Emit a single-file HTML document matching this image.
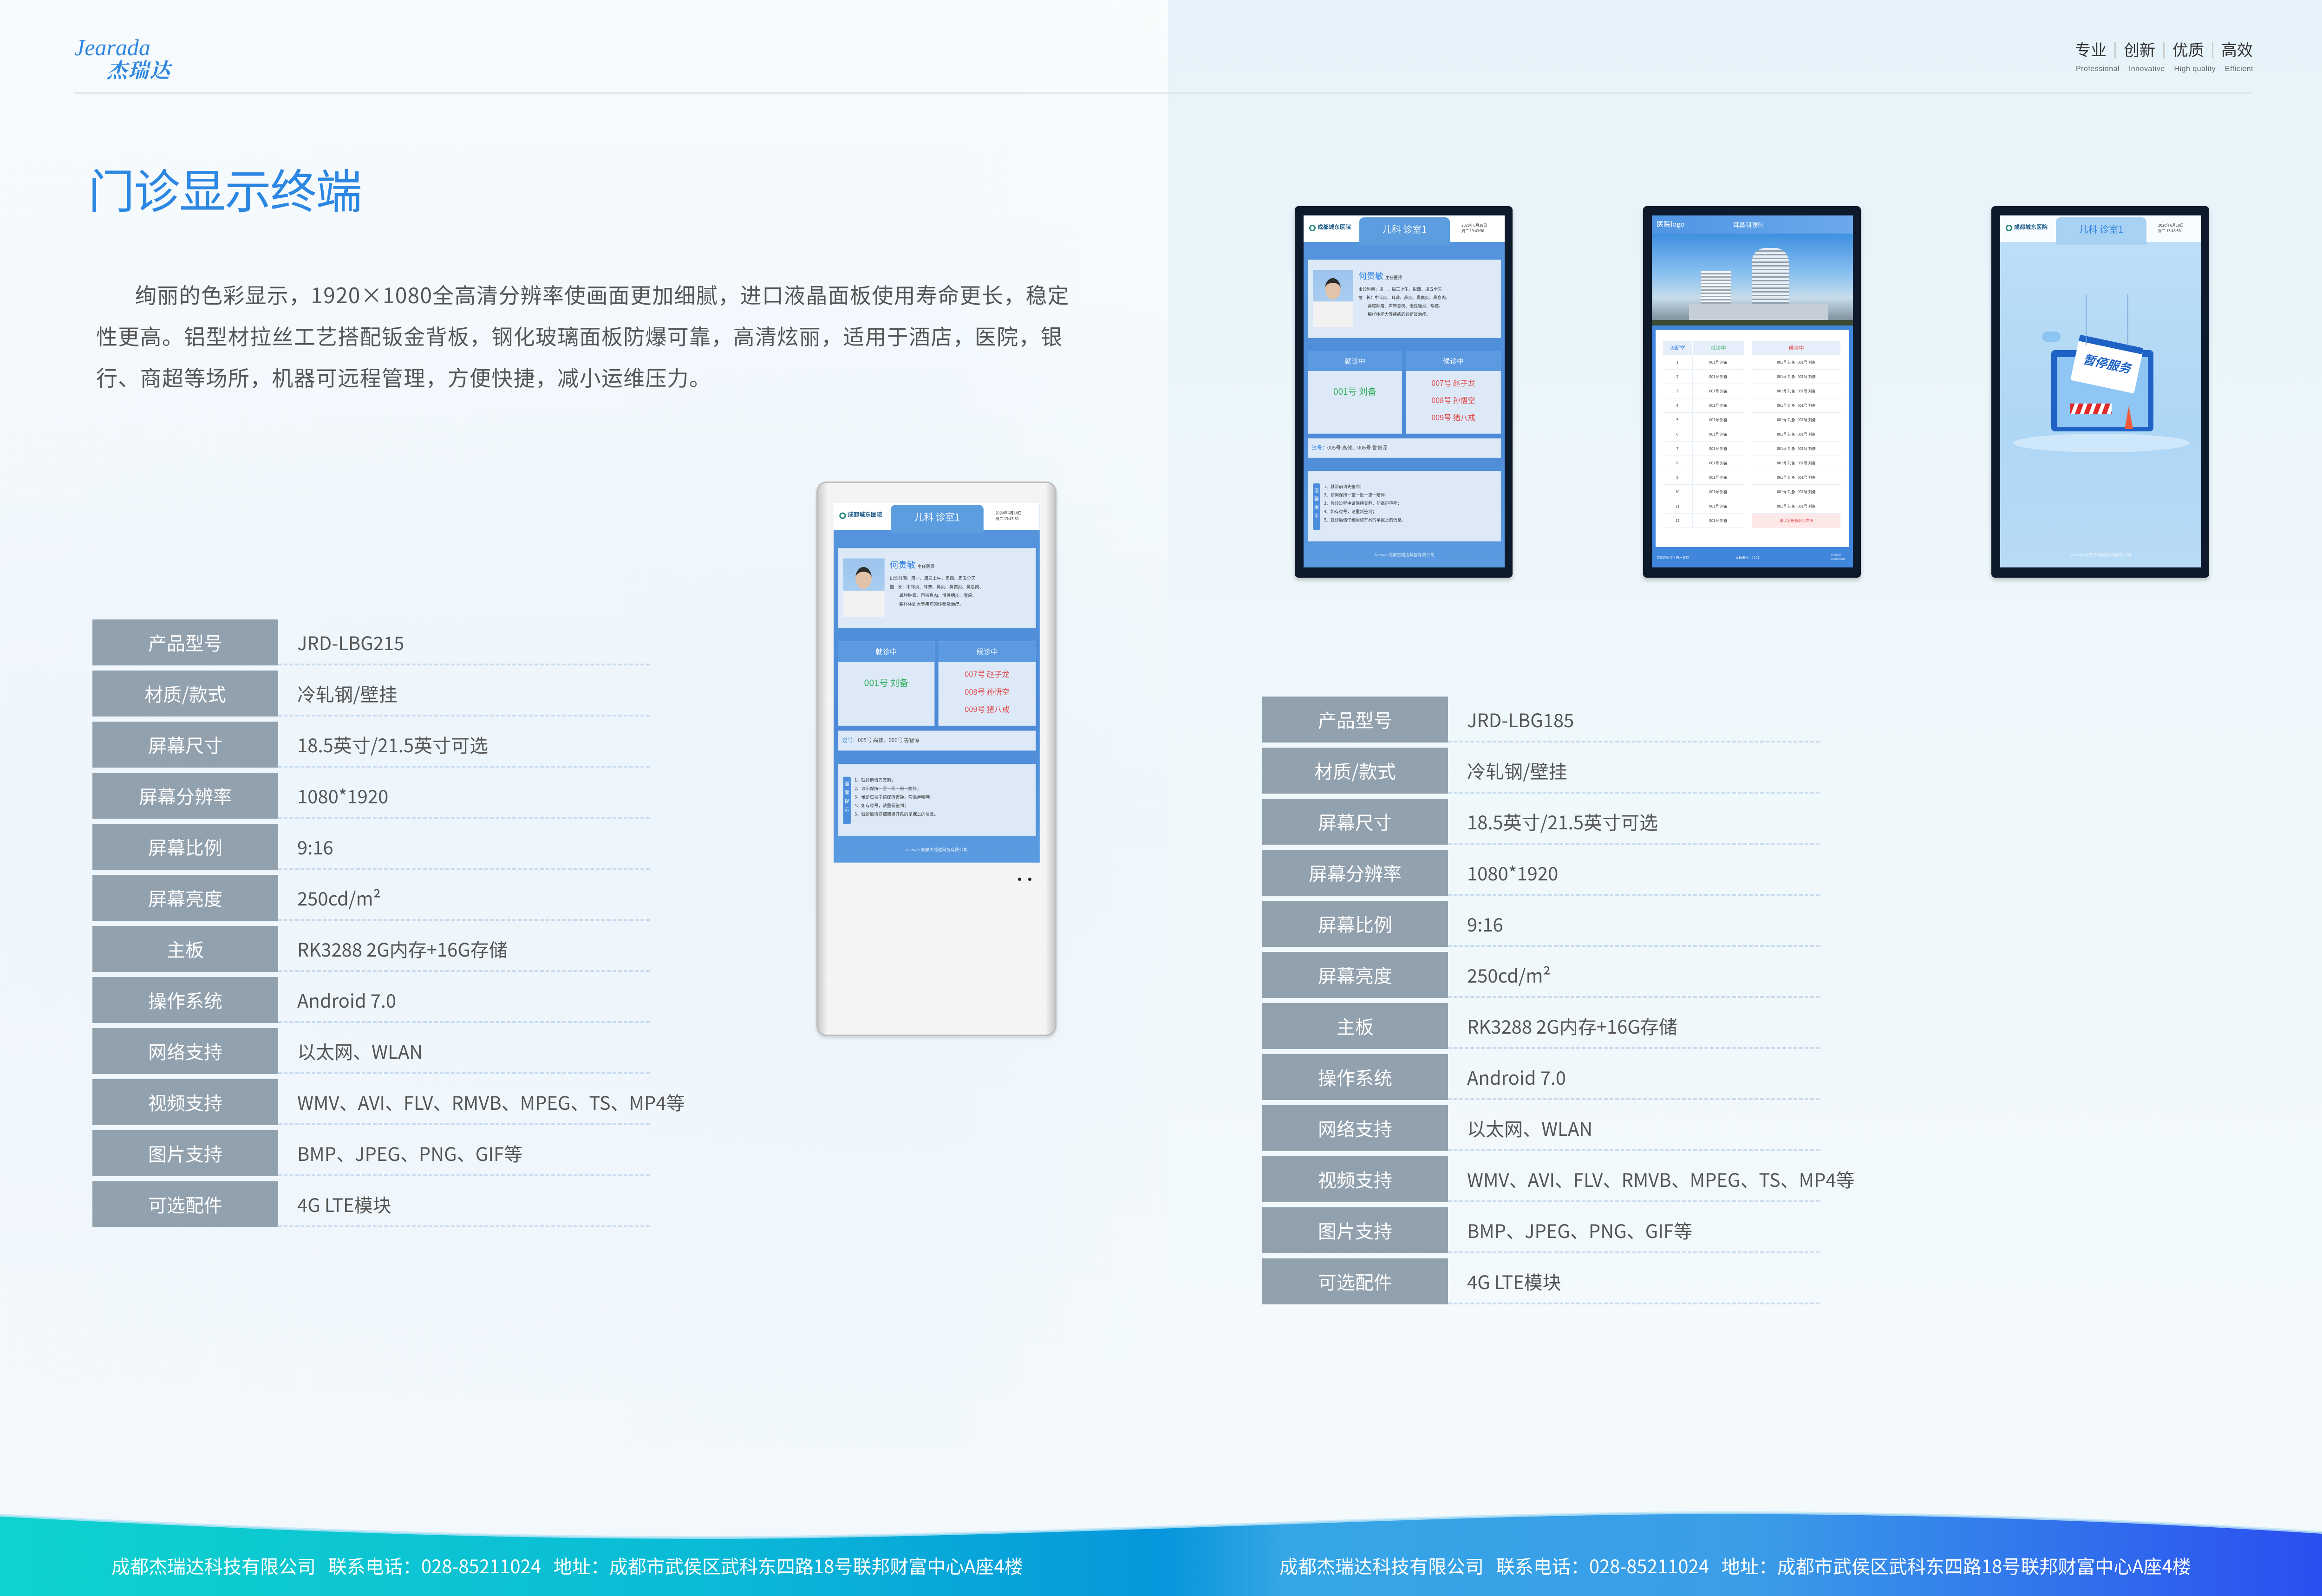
<!DOCTYPE html>
<html><head><meta charset="utf-8">
<style>
*{margin:0;padding:0;box-sizing:border-box}
body{width:5031px;height:3437px;position:relative;overflow:hidden;font-family:"Noto Sans CJK SC","Liberation Sans",sans-serif;
background:linear-gradient(90deg,#f1f7fc 0%,#eef6fc 40%,#f3f9fc 50%,#eef7fc 52%,#e9f4fb 75%,#eef7fb 100%);}
.a{position:absolute}
.bgl{left:0;top:0;width:2515px;height:3437px;background:linear-gradient(180deg,rgba(255,255,255,.5) 0%,rgba(230,242,251,.3) 50%,rgba(246,250,253,.6) 100%)}
.bgr{left:2515px;top:0;width:2516px;height:3437px;background:linear-gradient(180deg,#e6f3fa 0%,#eef7fb 40%,#f5fafc 100%)}
.lbl{width:400px;height:99px;background:#92a1ae;color:#fff;font-size:40px;line-height:99px;text-align:center}
.val{font-size:40px;color:#555;line-height:99px;height:99px;border-bottom:4px dashed #c9dcef}
.scr{position:absolute;width:433px;height:758px;overflow:hidden;background:linear-gradient(180deg,#5596de,#4c8ad8 60%,#5a9be0);font-family:"Noto Sans CJK SC",sans-serif}
.card{position:absolute;background:#dde9f7;border:1px solid #c5d9f1}
.dev{position:absolute;background:#0d1a2c;border-radius:8px}
</style></head><body>
<div class="a bgl"></div><div class="a bgr"></div>

<div class="a" style="left:160px;top:72px;font-family:'Liberation Serif',serif;font-style:italic;font-size:50px;color:#2f86e0;line-height:60px">Jearada</div>
<div class="a" style="left:230px;top:118px;font-family:'Noto Serif CJK SC',serif;font-weight:bold;font-style:italic;font-size:44px;color:#2f86e0;letter-spacing:2px;line-height:60px">杰瑞达</div>
<div class="a" style="left:160px;top:199px;width:4690px;height:4px;background:#e1e7ec"></div>
<div class="a" style="left:4468px;top:84px;font-size:34px;color:#333;white-space:nowrap;line-height:44px">专业<span style="display:inline-block;width:3px;height:36px;background:#ccc;margin:0 17px;vertical-align:-6px"></span>创新<span style="display:inline-block;width:3px;height:36px;background:#ccc;margin:0 17px;vertical-align:-6px"></span>优质<span style="display:inline-block;width:3px;height:36px;background:#ccc;margin:0 17px;vertical-align:-6px"></span>高效</div>
<div class="a" style="left:4470px;top:140px;font-family:'Liberation Sans',sans-serif;font-size:16px;color:#666;white-space:nowrap;letter-spacing:.5px">Professional&nbsp;&nbsp;&nbsp;&nbsp;Innovative&nbsp;&nbsp;&nbsp;&nbsp;High quality&nbsp;&nbsp;&nbsp;&nbsp;Efficient</div>

<div class="a" style="left:190px;top:340px;font-size:100px;color:#2c87e2;line-height:130px;letter-spacing:-2px">门诊显示终端</div>
<div class="a" style="left:207px;top:590px;white-space:nowrap;font-size:46px;line-height:89px;color:#555;letter-spacing:1.3px"><span style="display:inline-block;width:84px"></span>绚丽的色彩显示，1920×1080全高清分辨率使画面更加细腻，进口液晶面板使用寿命更长，稳定<br>性更高。铝型材拉丝工艺搭配钣金背板，钢化玻璃面板防爆可靠，高清炫丽，适用于酒店，医院，银<br>行、商超等场所，机器可远程管理，方便快捷，减小运维压力。</div>

<div class="a" style="left:199px;top:1334px">
<div style="position:relative">
<div class="a lbl" style="top:0">产品型号</div><div class="a val" style="top:0;left:400px;width:800px;padding-left:41px">JRD-LBG215</div>
<div class="a lbl" style="top:110px">材质/款式</div><div class="a val" style="top:110px;left:400px;width:800px;padding-left:41px">冷轧钢/壁挂</div>
<div class="a lbl" style="top:220px">屏幕尺寸</div><div class="a val" style="top:220px;left:400px;width:800px;padding-left:41px">18.5英寸/21.5英寸可选</div>
<div class="a lbl" style="top:330px">屏幕分辨率</div><div class="a val" style="top:330px;left:400px;width:800px;padding-left:41px">1080*1920</div>
<div class="a lbl" style="top:440px">屏幕比例</div><div class="a val" style="top:440px;left:400px;width:800px;padding-left:41px">9:16</div>
<div class="a lbl" style="top:550px">屏幕亮度</div><div class="a val" style="top:550px;left:400px;width:800px;padding-left:41px">250cd/m²</div>
<div class="a lbl" style="top:660px">主板</div><div class="a val" style="top:660px;left:400px;width:800px;padding-left:41px">RK3288 2G内存+16G存储</div>
<div class="a lbl" style="top:770px">操作系统</div><div class="a val" style="top:770px;left:400px;width:800px;padding-left:41px">Android 7.0</div>
<div class="a lbl" style="top:880px">网络支持</div><div class="a val" style="top:880px;left:400px;width:800px;padding-left:41px">以太网、WLAN</div>
<div class="a lbl" style="top:990px">视频支持</div><div class="a val" style="top:990px;left:400px;width:800px;padding-left:41px;white-space:nowrap">WMV、AVI、FLV、RMVB、MPEG、TS、MP4等</div>
<div class="a lbl" style="top:1100px">图片支持</div><div class="a val" style="top:1100px;left:400px;width:800px;padding-left:41px">BMP、JPEG、PNG、GIF等</div>
<div class="a lbl" style="top:1210px">可选配件</div><div class="a val" style="top:1210px;left:400px;width:800px;padding-left:41px">4G LTE模块</div>
</div></div>

<div class="a" style="left:2718px;top:1500px">
<div style="position:relative">
<div class="a lbl" style="top:0">产品型号</div><div class="a val" style="top:0;left:400px;width:800px;padding-left:41px">JRD-LBG185</div>
<div class="a lbl" style="top:110px">材质/款式</div><div class="a val" style="top:110px;left:400px;width:800px;padding-left:41px">冷轧钢/壁挂</div>
<div class="a lbl" style="top:220px">屏幕尺寸</div><div class="a val" style="top:220px;left:400px;width:800px;padding-left:41px">18.5英寸/21.5英寸可选</div>
<div class="a lbl" style="top:330px">屏幕分辨率</div><div class="a val" style="top:330px;left:400px;width:800px;padding-left:41px">1080*1920</div>
<div class="a lbl" style="top:440px">屏幕比例</div><div class="a val" style="top:440px;left:400px;width:800px;padding-left:41px">9:16</div>
<div class="a lbl" style="top:550px">屏幕亮度</div><div class="a val" style="top:550px;left:400px;width:800px;padding-left:41px">250cd/m²</div>
<div class="a lbl" style="top:660px">主板</div><div class="a val" style="top:660px;left:400px;width:800px;padding-left:41px">RK3288 2G内存+16G存储</div>
<div class="a lbl" style="top:770px">操作系统</div><div class="a val" style="top:770px;left:400px;width:800px;padding-left:41px">Android 7.0</div>
<div class="a lbl" style="top:880px">网络支持</div><div class="a val" style="top:880px;left:400px;width:800px;padding-left:41px">以太网、WLAN</div>
<div class="a lbl" style="top:990px">视频支持</div><div class="a val" style="top:990px;left:400px;width:800px;padding-left:41px;white-space:nowrap">WMV、AVI、FLV、RMVB、MPEG、TS、MP4等</div>
<div class="a lbl" style="top:1100px">图片支持</div><div class="a val" style="top:1100px;left:400px;width:800px;padding-left:41px">BMP、JPEG、PNG、GIF等</div>
<div class="a lbl" style="top:1210px">可选配件</div><div class="a val" style="top:1210px;left:400px;width:800px;padding-left:41px">4G LTE模块</div>
</div></div>

<div class="a" style="left:1758px;top:1037px;width:517px;height:1194px;background:linear-gradient(90deg,#c9c9c9,#f4f4f4 4%,#f4f4f4 96%,#c4c4c4);border-radius:22px;border:3px solid #bdbdbd;box-shadow:0 4px 8px rgba(0,0,0,.15)"></div>
<div class="a" style="left:2192px;top:1890px;width:7px;height:7px;border-radius:50%;background:#222"></div>
<div class="a" style="left:2214px;top:1890px;width:7px;height:7px;border-radius:50%;background:#222"></div>

<div class="scr" style="left:1795px;top:1083px;transform-origin:0 0;transform:scale(1.025,1.022)">
 <div class="a" style="left:0;top:0;width:433px;height:57px;background:#fff"></div>
 <div class="a" style="left:12px;top:20px;width:14px;height:14px;border-radius:50%;border:3px solid #2a8a7c"></div>
 <div class="a" style="left:30px;top:16px;font-size:12px;font-weight:bold;color:#1d5c8c">成都城东医院</div>
 <div class="a" style="left:120px;top:4px;width:195px;height:60px;background:#5c9de0;border-radius:10px 10px 0 0"></div>
 <div class="a" style="left:120px;top:14px;width:195px;text-align:center;font-size:20px;color:#fff">儿科 诊室1</div>
 <div class="a" style="left:340px;top:16px;font-size:8px;color:#333;line-height:12px">2020年6月18日<br>周二 13:43:50</div>
 <div class="card" style="left:9px;top:95px;width:416px;height:169px"></div>
 <div class="a" style="left:20px;top:117px;width:87px;height:123px;background:linear-gradient(180deg,#9cc4ee 0%,#a9cdf0 55%,#f2f2f2 56%)"></div>
 <div class="a" style="left:46px;top:135px;width:34px;height:46px;border-radius:50%;background:#e2c2a8;border-top:10px solid #2b2b2b"></div>
 <div class="a" style="left:118px;top:117px;font-size:18px;color:#2c7fe0">何贵敏 <span style="font-size:9px;color:#333">主任医师</span></div>
 <div class="a" style="left:118px;top:150px;font-size:9px;color:#333;line-height:18px;width:300px">出诊时间：周一、周三上午，周四、周五全天<br>擅&nbsp;&nbsp;&nbsp;&nbsp;长：中耳炎、耳聋、鼻炎、鼻窦炎、鼻息肉、<br>&nbsp;&nbsp;&nbsp;&nbsp;&nbsp;&nbsp;&nbsp;&nbsp;&nbsp;&nbsp;鼻腔肿瘤、声带息肉、慢性咽炎、喉癌、<br>&nbsp;&nbsp;&nbsp;&nbsp;&nbsp;&nbsp;&nbsp;&nbsp;&nbsp;&nbsp;腺样体肥大等疾病的诊断及治疗。</div>
 <div class="card" style="left:9px;top:292px;width:203px;height:178px"></div>
 <div class="a" style="left:9px;top:292px;width:203px;height:43px;background:#5b9ae0;color:#fff;font-size:15px;text-align:center;line-height:43px">就诊中</div>
 <div class="a" style="left:9px;top:365px;width:203px;text-align:center;color:#2fae5a;font-size:19px">001号 刘备</div>
 <div class="card" style="left:220px;top:292px;width:205px;height:178px"></div>
 <div class="a" style="left:220px;top:292px;width:205px;height:43px;background:#5b9ae0;color:#fff;font-size:15px;text-align:center;line-height:43px">候诊中</div>
 <div class="a" style="left:220px;top:342px;width:205px;text-align:center;color:#e04848;font-size:16px;line-height:37px">007号 赵子龙<br>008号 孙悟空<br>009号 猪八戒</div>
 <div class="card" style="left:9px;top:480px;width:416px;height:42px"></div>
 <div class="a" style="left:18px;top:492px;font-size:11px;color:#555"><span style="color:#2c7fe0">过号：</span>005号 高俅、006号 鲁智深</div>
 <div class="card" style="left:9px;top:550px;width:416px;height:152px"></div>
 <div class="a" style="left:20px;top:577px;width:16px;height:100px;background:#4a8ddc;border-radius:3px;color:#fff;font-size:10px;text-align:center;line-height:18px;padding-top:6px">温<br>馨<br>提<br>示</div>
 <div class="a" style="left:44px;top:575px;font-size:9px;color:#333;line-height:18px">1、就诊前请先签到；<br>2、诊间保持一室一医一患一陪伴；<br>3、候诊过程中请保持安静，勿高声喧哗；<br>4、如有过号，请重新签到；<br>5、就诊后请仔细阅读开具的单据上的信息。</div>
 <div class="a" style="left:0;top:724px;width:433px;text-align:center;font-size:9px;color:#e8f0fb"><i style="font-family:'Liberation Serif',serif">Jearada</i> 成都杰瑞达科技有限公司</div>
</div>

<div class="dev" style="left:2788px;top:444px;width:469px;height:800px;box-shadow:0 6px 10px rgba(0,0,0,.2)"></div>
<div class="dev" style="left:3538px;top:444px;width:469px;height:800px;box-shadow:0 6px 10px rgba(0,0,0,.2)"></div>
<div class="dev" style="left:4288px;top:444px;width:469px;height:800px;box-shadow:0 6px 10px rgba(0,0,0,.2)"></div>

<div class="scr" style="left:2807px;top:464px">
 <div class="a" style="left:0;top:0;width:433px;height:57px;background:#fff"></div>
 <div class="a" style="left:12px;top:20px;width:14px;height:14px;border-radius:50%;border:3px solid #2a8a7c"></div>
 <div class="a" style="left:30px;top:16px;font-size:12px;font-weight:bold;color:#1d5c8c">成都城东医院</div>
 <div class="a" style="left:120px;top:4px;width:195px;height:60px;background:#5c9de0;border-radius:10px 10px 0 0"></div>
 <div class="a" style="left:120px;top:14px;width:195px;text-align:center;font-size:20px;color:#fff">儿科 诊室1</div>
 <div class="a" style="left:340px;top:16px;font-size:8px;color:#333;line-height:12px">2020年6月18日<br>周二 13:43:50</div>
 <div class="card" style="left:9px;top:95px;width:416px;height:169px"></div>
 <div class="a" style="left:20px;top:117px;width:87px;height:123px;background:linear-gradient(180deg,#9cc4ee 0%,#a9cdf0 55%,#f2f2f2 56%)"></div>
 <div class="a" style="left:46px;top:135px;width:34px;height:46px;border-radius:50%;background:#e2c2a8;border-top:10px solid #2b2b2b"></div>
 <div class="a" style="left:118px;top:117px;font-size:18px;color:#2c7fe0">何贵敏 <span style="font-size:9px;color:#333">主任医师</span></div>
 <div class="a" style="left:118px;top:150px;font-size:9px;color:#333;line-height:18px;width:300px">出诊时间：周一、周三上午，周四、周五全天<br>擅&nbsp;&nbsp;&nbsp;&nbsp;长：中耳炎、耳聋、鼻炎、鼻窦炎、鼻息肉、<br>&nbsp;&nbsp;&nbsp;&nbsp;&nbsp;&nbsp;&nbsp;&nbsp;&nbsp;&nbsp;鼻腔肿瘤、声带息肉、慢性咽炎、喉癌、<br>&nbsp;&nbsp;&nbsp;&nbsp;&nbsp;&nbsp;&nbsp;&nbsp;&nbsp;&nbsp;腺样体肥大等疾病的诊断及治疗。</div>
 <div class="card" style="left:9px;top:292px;width:203px;height:178px"></div>
 <div class="a" style="left:9px;top:292px;width:203px;height:43px;background:#5b9ae0;color:#fff;font-size:15px;text-align:center;line-height:43px">就诊中</div>
 <div class="a" style="left:9px;top:365px;width:203px;text-align:center;color:#2fae5a;font-size:19px">001号 刘备</div>
 <div class="card" style="left:220px;top:292px;width:205px;height:178px"></div>
 <div class="a" style="left:220px;top:292px;width:205px;height:43px;background:#5b9ae0;color:#fff;font-size:15px;text-align:center;line-height:43px">候诊中</div>
 <div class="a" style="left:220px;top:342px;width:205px;text-align:center;color:#e04848;font-size:16px;line-height:37px">007号 赵子龙<br>008号 孙悟空<br>009号 猪八戒</div>
 <div class="card" style="left:9px;top:480px;width:416px;height:42px"></div>
 <div class="a" style="left:18px;top:492px;font-size:11px;color:#555"><span style="color:#2c7fe0">过号：</span>005号 高俅、006号 鲁智深</div>
 <div class="card" style="left:9px;top:550px;width:416px;height:152px"></div>
 <div class="a" style="left:20px;top:577px;width:16px;height:100px;background:#4a8ddc;border-radius:3px;color:#fff;font-size:10px;text-align:center;line-height:18px;padding-top:6px">温<br>馨<br>提<br>示</div>
 <div class="a" style="left:44px;top:575px;font-size:9px;color:#333;line-height:18px">1、就诊前请先签到；<br>2、诊间保持一室一医一患一陪伴；<br>3、候诊过程中请保持安静，勿高声喧哗；<br>4、如有过号，请重新签到；<br>5、就诊后请仔细阅读开具的单据上的信息。</div>
 <div class="a" style="left:0;top:724px;width:433px;text-align:center;font-size:9px;color:#e8f0fb"><i style="font-family:'Liberation Serif',serif">Jearada</i> 成都杰瑞达科技有限公司</div>
</div>

<div class="scr" style="left:3557px;top:464px;background:#3f86dc">
 <div class="a" style="left:0;top:0;width:433px;height:39px;background:linear-gradient(90deg,#4f94e4,#6aa9ea)"></div>
 <div class="a" style="left:10px;top:8px;font-size:15px;color:#fff">医院logo</div>
 <div class="a" style="left:175px;top:10px;font-size:13px;color:#fff">耳鼻咽喉科</div>
 <div class="a" style="left:0;top:39px;width:433px;height:198px;background:linear-gradient(180deg,#3d8fe0 0%,#8cc2f0 45%,#c7dcea 70%,#6d7f8a 100%)"></div>
 <div class="a" style="left:215px;top:70px;width:80px;height:155px;background:repeating-linear-gradient(180deg,#e8eef3 0 5px,#8fa1b1 5px 8px);border-radius:30px 30px 0 0"></div>
 <div class="a" style="left:105px;top:120px;width:65px;height:105px;background:repeating-linear-gradient(180deg,#f2f4f6 0 4px,#99a7b4 4px 7px)"></div>
 <div class="a" style="left:80px;top:190px;width:300px;height:38px;background:#c5ced6"></div>
 <div class="a" style="left:0;top:225px;width:433px;height:12px;background:#3a4a35"></div>
 <div class="a" style="left:8px;top:246px;width:417px;height:468px;background:#fff"></div>
 <div class="a" style="left:24px;top:270px;width:62px;height:31px;background:#e6effb;color:#2c7fe0;font-size:11px;text-align:center;line-height:31px">诊断室</div>
 <div class="a" style="left:88px;top:270px;width:110px;height:31px;background:#e6effb;color:#2fae5a;font-size:11px;text-align:center;line-height:31px">就诊中</div>
 <div class="a" style="left:216px;top:270px;width:190px;height:31px;background:#e6effb;color:#e04848;font-size:11px;text-align:center;line-height:31px">候诊中</div>
 <div class="a" style="left:24px;top:301px;width:382px;height:372px;background:repeating-linear-gradient(180deg,#fff 0 30px,#e6eef8 30px 31px);font-size:8px;color:#333;line-height:31px">
  <div class="a" style="left:0;top:0;width:62px;text-align:center">1<br>2<br>3<br>4<br>5<br>6<br>7<br>8<br>9<br>10<br>11<br>12</div>
  <div class="a" style="left:64px;top:0;width:110px;text-align:center">001号 刘备<br>001号 刘备<br>001号 刘备<br>001号 刘备<br>001号 刘备<br>001号 刘备<br>001号 刘备<br>001号 刘备<br>001号 刘备<br>001号 刘备<br>001号 刘备<br>001号 刘备</div>
  <div class="a" style="left:192px;top:0;width:190px;text-align:center">001号 刘备 &nbsp; 001号 刘备<br>001号 刘备 &nbsp; 001号 刘备<br>001号 刘备 &nbsp; 001号 刘备<br>001号 刘备 &nbsp; 001号 刘备<br>001号 刘备 &nbsp; 001号 刘备<br>001号 刘备 &nbsp; 001号 刘备<br>001号 刘备 &nbsp; 001号 刘备<br>001号 刘备 &nbsp; 001号 刘备<br>001号 刘备 &nbsp; 001号 刘备<br>001号 刘备 &nbsp; 001号 刘备<br>001号 刘备 &nbsp; 001号 刘备<br><span style="color:#e04848;background:#fde8e8;display:inline-block;width:190px">请以上患者耐心等待</span></div>
  <div class="a" style="left:62px;top:0;width:2px;height:372px;background:#e6eef8"></div>
  <div class="a" style="left:174px;top:0;width:18px;height:372px;background:#fff"></div>
 </div>
 <div class="a" style="left:10px;top:732px;font-size:7px;color:#e8f0fb">杰瑞达医疗·技术支持</div>
 <div class="a" style="left:180px;top:732px;font-size:7px;color:#e8f0fb">设备编号：TC01</div>
 <div class="a" style="left:385px;top:726px;font-size:6px;color:#e8f0fb;line-height:9px">09:00:00<br>2020/01/01</div>
</div>

<div class="scr" style="left:4307px;top:464px;background:linear-gradient(180deg,#bfe0f8,#aed6f5 60%,#b8dbf6)">
 <div class="a" style="left:0;top:0;width:433px;height:57px;background:#fff;opacity:.9"></div>
 <div class="a" style="left:12px;top:20px;width:14px;height:14px;border-radius:50%;border:3px solid #2a8a7c"></div>
 <div class="a" style="left:30px;top:16px;font-size:12px;font-weight:bold;color:#1d5c8c">成都城东医院</div>
 <div class="a" style="left:120px;top:4px;width:195px;height:60px;background:#a8d2f3;border-radius:10px 10px 0 0"></div>
 <div class="a" style="left:120px;top:14px;width:195px;text-align:center;font-size:20px;color:#2c7fe0">儿科 诊室1</div>
 <div class="a" style="left:340px;top:16px;font-size:8px;color:#333;line-height:12px">2020年6月18日<br>周二 13:43:50</div>
 <div class="a" style="left:28px;top:470px;width:380px;height:40px;border-radius:50%;background:#cfe7fa"></div>
 <div class="a" style="left:110px;top:290px;width:220px;height:175px;background:#1e62c6;border-radius:8px"></div>
 <div class="a" style="left:123px;top:305px;width:195px;height:150px;background:#8fc6f3"></div>
 <div class="a" style="left:160px;top:270px;width:140px;height:100px;background:#fff;transform:rotate(12deg);border-top:14px solid #1e62c6;border-radius:4px;color:#1e62c6;font-size:26px;font-weight:bold;font-style:italic;text-align:center;line-height:70px">暂停服务</div>
 <div class="a" style="left:184px;top:170px;width:2px;height:110px;background:#7aa9d8"></div>
 <div class="a" style="left:274px;top:170px;width:2px;height:110px;background:#7aa9d8"></div>
 <div class="a" style="left:150px;top:405px;width:90px;height:22px;background:repeating-linear-gradient(110deg,#e02a2a 0 10px,#fff 10px 18px)"></div>
 <div class="a" style="left:268px;top:410px;width:0;height:0;border-left:9px solid transparent;border-right:9px solid transparent;border-bottom:50px solid #f05a3a"></div>
 <div class="a" style="left:90px;top:250px;width:40px;height:22px;border-radius:12px;background:#8cc5f2"></div>
 <div class="a" style="left:0;top:724px;width:433px;text-align:center;font-size:9px;color:#eaf4fd"><i style="font-family:'Liberation Serif',serif">Jearada</i> 成都杰瑞达科技有限公司</div>
</div>

<svg class="a" style="left:0;top:3240px" width="5031" height="197" viewBox="0 0 5031 197">
<defs>
<linearGradient id="g" x1="0" x2="1" y1="0" y2="0">
<stop offset="0" stop-color="#0fd2ce"/><stop offset=".3" stop-color="#0abbd6"/><stop offset=".5" stop-color="#0796dc"/><stop offset=".55" stop-color="#36a6e6"/><stop offset=".75" stop-color="#3a9de8"/><stop offset="1" stop-color="#2a4cf0"/>
</linearGradient>
</defs>
<path d="M0 23 C700 60 1200 75 1700 70 C2600 55 3200 12 3850 18 C4300 22 4700 40 5031 62 L5031 197 L0 197 Z" fill="url(#g)"/>
<path d="M0 23 C700 60 1200 75 1700 70 C2600 55 3200 12 3850 18 C4300 22 4700 40 5031 62" fill="none" stroke="#bfe6f8" stroke-width="6" opacity=".8"/>
</svg>
<div class="a" style="left:240px;top:3346px;font-size:40px;color:#fff;white-space:nowrap;line-height:50px">成都杰瑞达科技有限公司&nbsp;&nbsp;&nbsp;联系电话：028-85211024&nbsp;&nbsp;&nbsp;地址：成都市武侯区武科东四路18号联邦财富中心A座4楼</div>
<div class="a" style="left:2755px;top:3346px;font-size:40px;color:#fff;white-space:nowrap;line-height:50px">成都杰瑞达科技有限公司&nbsp;&nbsp;&nbsp;联系电话：028-85211024&nbsp;&nbsp;&nbsp;地址：成都市武侯区武科东四路18号联邦财富中心A座4楼</div>
</body></html>
